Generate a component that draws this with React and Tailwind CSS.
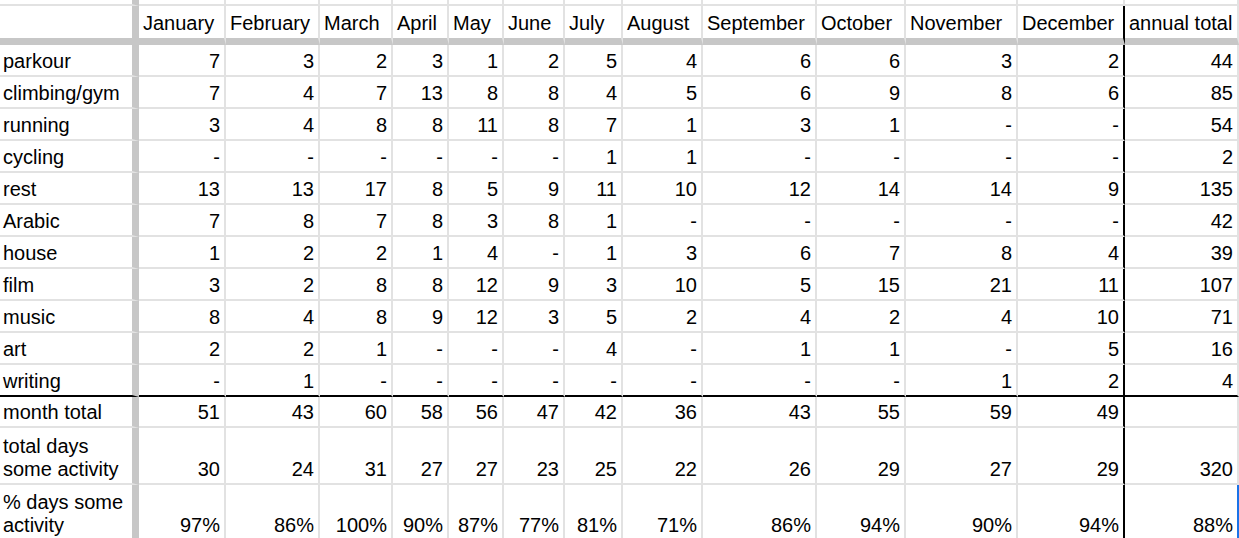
import React from "react"

const months = [
  "January", "February", "March", "April", "May", "June",
  "July", "August", "September", "October", "November", "December",
]

const activities = [
  ["parkour", ["7", "3", "2", "3", "1", "2", "5", "4", "6", "6", "3", "2"], "44"],
  ["climbing/gym", ["7", "4", "7", "13", "8", "8", "4", "5", "6", "9", "8", "6"], "85"],
  ["running", ["3", "4", "8", "8", "11", "8", "7", "1", "3", "1", "-", "-"], "54"],
  ["cycling", ["-", "-", "-", "-", "-", "-", "1", "1", "-", "-", "-", "-"], "2"],
  ["rest", ["13", "13", "17", "8", "5", "9", "11", "10", "12", "14", "14", "9"], "135"],
  ["Arabic", ["7", "8", "7", "8", "3", "8", "1", "-", "-", "-", "-", "-"], "42"],
  ["house", ["1", "2", "2", "1", "4", "-", "1", "3", "6", "7", "8", "4"], "39"],
  ["film", ["3", "2", "8", "8", "12", "9", "3", "10", "5", "15", "21", "11"], "107"],
  ["music", ["8", "4", "8", "9", "12", "3", "5", "2", "4", "2", "4", "10"], "71"],
  ["art", ["2", "2", "1", "-", "-", "-", "4", "-", "1", "1", "-", "5"], "16"],
  ["writing", ["-", "1", "-", "-", "-", "-", "-", "-", "-", "-", "1", "2"], "4"],
]

const monthTotal = ["51", "43", "60", "58", "56", "47", "42", "36", "43", "55", "59", "49"]
const daysActive = ["30", "24", "31", "27", "27", "23", "25", "22", "26", "29", "27", "29"]
const pctActive = ["97%", "86%", "100%", "90%", "87%", "77%", "81%", "71%", "86%", "94%", "90%", "94%"]

// right border per column: 0 = frozen column bar, 12 = december (black divider)
const rightBorder = (i, plain) => {
  if (i === 0) return "border-r-[7px] border-r-[#c7c7c7]"
  if (i === 12 && !plain) return "border-r-2 border-r-black"
  return "border-r-2 border-r-[#e2e2e2]"
}

const Cell = ({ i, h, bottom, right, align, children, plain, pb = "pb-[2px]" }) => {
  const pad = i === 0 ? "pl-[3px] pr-[3px]" : "pl-[4px] pr-[4px]"
  const justify = align === "right" ? "justify-end text-right" : "justify-start text-left"
  return (
    <div
      className={`flex items-end ${justify} ${pad} ${pb} whitespace-nowrap ${h} ${bottom} ${right || rightBorder(i, plain)}`}
    >
      {children}
    </div>
  )
}

const grayBottom = "border-b-2 border-b-[#e2e2e2]"
const frozenBottom = "border-b-[7px] border-b-[#c7c7c7]"

const Row = ({ label, values, total, h, bottom = grayBottom, lastRight }) => (
  <>
    <Cell i={0} h={h} bottom={bottom}>
      <span>{label}</span>
    </Cell>
    {values.map((v, k) => (
      <Cell key={k} i={k + 1} h={h} bottom={bottom} align="right">
        {v}
      </Cell>
    ))}
    <Cell i={13} h={h} bottom={bottom} align="right" right={lastRight}>
      {total}
    </Cell>
  </>
)

export default function App() {
  return (
    <div className="w-[1239px] h-[538px] overflow-hidden bg-white text-black font-['Liberation_Sans',Arial,sans-serif] text-[20px] leading-[23px]">
      <div className="grid grid-cols-[139px_87px_94px_73px_56px_55px_61px_58px_80px_114px_89px_112px_107px_114px]">
        {/* cut-off row above the header */}
        {Array.from({ length: 14 }).map((_, i) => (
          <Cell key={"top" + i} i={i} h="h-[6px]" bottom={grayBottom} plain pb="pb-0" />
        ))}

        {/* header */}
        <Cell i={0} h="h-[39px]" bottom={frozenBottom} pb="pb-[3px]" />
        {months.map((m, k) => (
          <Cell key={m} i={k + 1} h="h-[39px]" bottom={frozenBottom} pb="pb-[3px]">
            {m}
          </Cell>
        ))}
        <Cell i={13} h="h-[39px]" bottom={frozenBottom} pb="pb-[3px]">
          annual total
        </Cell>

        {activities.map(([label, values, total], r) => (
          <Row
            key={label}
            label={label}
            values={values}
            total={total}
            h="h-[32px]"
            bottom={r === activities.length - 1 ? "border-b-2 border-b-black" : grayBottom}
          />
        ))}

        <Row label="month total" values={monthTotal} total="" h="h-[31px]" />
        <Row
          label={
            <>
              total days
              <br />
              some activity
            </>
          }
          values={daysActive}
          total="320"
          h="h-[57px]"
        />
        <Row
          label={
            <>
              % days some
              <br />
              activity
            </>
          }
          values={pctActive}
          total="88%"
          h="h-[56px]"
          lastRight="border-r-2 border-r-[#1a73e8]"
        />
      </div>
    </div>
  )
}
